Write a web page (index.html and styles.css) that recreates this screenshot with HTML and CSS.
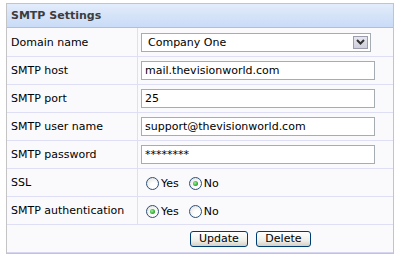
FILE: index.html
```html
<!DOCTYPE html>
<html lang="en">
<head>
    <meta charset="UTF-8">
    <title>SMTP Settings</title>
    <link rel="stylesheet" href="styles.css">
</head>
<body>
    <div class="panel">
        <div class="panel-title">SMTP Settings</div>

        <table class="settings">
            <tr>
                <td class="label">Domain name</td>
                <td class="value">
                    <div class="select">
                        <span class="select-text">Company One</span>
                        <span class="select-arrow">
                            <svg width="9" height="6" viewBox="0 0 9 6"><path d="M1 1 L4.5 4.5 L8 1" fill="none" stroke="#333" stroke-width="2"/></svg>
                        </span>
                    </div>
                </td>
            </tr>
            <tr>
                <td class="label">SMTP host</td>
                <td class="value"><input type="text" class="field" value="mail.thevisionworld.com"></td>
            </tr>
            <tr>
                <td class="label">SMTP port</td>
                <td class="value"><input type="text" class="field" value="25"></td>
            </tr>
            <tr>
                <td class="label">SMTP user name</td>
                <td class="value"><input type="text" class="field" value="support@thevisionworld.com"></td>
            </tr>
            <tr>
                <td class="label">SMTP password</td>
                <td class="value"><input type="text" class="field" value="********"></td>
            </tr>
            <tr>
                <td class="label">SSL</td>
                <td class="value">
                    <div class="choices">
                        <label class="option"><span class="radio"></span>Yes</label>
                        <label class="option"><span class="radio checked"></span>No</label>
                    </div>
                </td>
            </tr>
            <tr>
                <td class="label">SMTP authentication</td>
                <td class="value">
                    <div class="choices">
                        <label class="option"><span class="radio checked"></span>Yes</label>
                        <label class="option"><span class="radio"></span>No</label>
                    </div>
                </td>
            </tr>
            <tr>
                <td class="actions" colspan="2">
                    <button class="btn">Update</button>
                    <button class="btn">Delete</button>
                </td>
            </tr>
        </table>
    </div>
</body>
</html>
```

FILE: styles.css
```css
html, body {
    margin: 0;
    padding: 0;
}

body {
    font-family: "DejaVu Sans", Verdana, sans-serif;
    font-size: 11px;
    color: #000;
    background-color: #fff;
}

.panel {
    margin: 3px 0 0 6px;
    width: 386px;
    border: 1px solid #c4c4c4;
    background-color: #fafafc;
}

.panel-title {
    height: 23px;
    line-height: 23px;
    padding-left: 4px;
    font-weight: bold;
    color: #3c3c3c;
    background: linear-gradient(#e2ecfb, #c9dbf6);
    border-bottom: 1px solid #a6c0ec;
}

/* tabel isian */

.settings {
    width: 100%;
    border-collapse: collapse;
}

.settings td {
    height: 27px;
    padding: 0;
    border-top: 1px solid #dedef4;
}

.settings tr:first-child td {
    border-top: none;
    height: 28px;
}

.settings .label {
    width: 126px;
    padding-left: 4px;
    border-right: 1px solid #dedef4;
}

.settings .value {
    padding-left: 3px;
}

.field {
    display: block;
    box-sizing: border-box;
    width: 234px;
    height: 19px;
    margin: 0;
    padding: 0 3px;
    border: 1px solid #a5acb2;
    font-family: "DejaVu Sans", Verdana, sans-serif;
    font-size: 11px;
    color: #000;
    background-color: #fff;
}

.select {
    display: flex;
    align-items: center;
    justify-content: space-between;
    box-sizing: border-box;
    width: 230px;
    height: 19px;
    padding: 0 2px 0 6px;
    border: 1px solid #a5acb2;
    background-color: #fff;
}

.select-arrow {
    display: flex;
    align-items: center;
    justify-content: center;
    box-sizing: border-box;
    width: 15px;
    height: 13px;
    border: 1px solid #9c9cae;
    background: linear-gradient(#e6e6f0, #cfcfdc);
}

/* radio gaya lama */

.choices {
    display: flex;
    align-items: center;
    padding-top: 2px;
}

.option {
    display: flex;
    align-items: center;
    margin-left: 5px;
    margin-right: 5px;
}

.radio {
    box-sizing: border-box;
    display: flex;
    align-items: center;
    justify-content: center;
    width: 13px;
    height: 13px;
    margin-right: 2px;
    border: 1px solid #2c4f78;
    border-radius: 50%;
    background: radial-gradient(circle at 65% 70%, #ffffff 30%, #dcdcd6 100%);
}

.radio.checked::after {
    content: "";
    width: 5px;
    height: 5px;
    border-radius: 50%;
    background: radial-gradient(circle at 40% 40%, #9ef09e, #21a121 70%);
}

.actions {
    padding-left: 183px !important;
    border-bottom: 1px solid #d6d6f0;
}

.btn {
    box-sizing: border-box;
    height: 16px;
    margin: 0 5px 0 0;
    padding: 0 8px;
    border: 1px solid #003c74;
    border-radius: 3px;
    font-family: "DejaVu Sans", Verdana, sans-serif;
    font-size: 11px;
    line-height: 13px;
    color: #000;
    background: linear-gradient(#ffffff, #f0f0ea 60%, #d6d0c5);
    cursor: pointer;
}
```
